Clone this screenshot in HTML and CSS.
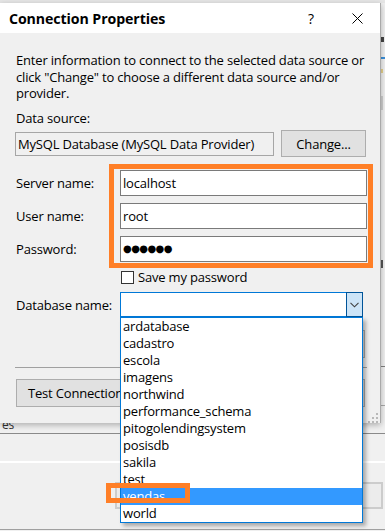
FILE: index.html
```html
<!DOCTYPE html>
<html>
<head>
<meta charset="utf-8">
<title>Connection Properties</title>
<link rel="stylesheet" href="styles.css">
</head>
<body>
<div class="desktop">
  <div class="backwin">
    <div class="bw-top">
      <div class="bw-left"><span class="bw-es">es</span></div>
      <div class="bw-strip">
        <div class="frag frag-s"></div>
        <div class="frag frag-blue"></div>
        <div class="frag frag-yellow"></div>
        <div class="frag frag-box"></div>
        <div class="frag frag-t"></div>
        <div class="frag frag-line1"></div>
        <div class="frag frag-line2"></div>
      </div>
    </div>
    <div class="bw-line"></div>
    <div class="bw-white"></div>
    <div class="bw-lower"><div class="bw-btn"></div></div>
    <div class="bw-bottom"></div>
  </div>

  <div class="dialog">
    <div class="titlebar">
      <span class="title">Connection Properties</span>
      <span class="cap-btn cap-help">?</span>
      <span class="cap-btn cap-close">
        <svg width="11" height="11" viewBox="0 0 11 11"><path d="M0.5 0.5 L10.5 10.5 M10.5 0.5 L0.5 10.5" stroke="#000" stroke-width="1" fill="none"/></svg>
      </span>
    </div>
    <div class="body">
      <p class="desc">Enter information to connect to the selected data source or<br>click "Change" to choose a different data source and/or<br>provider.</p>
      <div class="label">Data source:</div>
      <div class="ds-row">
        <div class="ds-box">MySQL Database (MySQL Data Provider)</div>
        <div class="btn btn-change">Change...</div>
      </div>
      <div class="fields">
        <div class="f-label">Server name:</div><div class="textbox">localhost</div>
        <div class="f-label">User name:</div><div class="textbox">root</div>
        <div class="f-label">Password:</div><div class="textbox pw">●●●●●●</div>
      </div>
      <div class="save-row"><span class="checkbox"></span><span>Save my password</span></div>
      <div class="db-row">
        <div class="f-label">Database name:</div>
        <div class="combo">
          <div class="combo-text"></div>
          <div class="combo-btn">
            <svg width="9" height="6" viewBox="0 0 9 6"><path d="M0.5 0.8 L4.5 4.8 L8.5 0.8" stroke="#404040" stroke-width="1.1" fill="none"/></svg>
          </div>
        </div>
      </div>
      <div class="adv-row"><div class="btn btn-adv">Advanced...</div></div>
      <div class="sep"></div>
      <div class="btn-row">
        <div class="btn btn-test">Test Connection</div>
        <div class="btn btn-ok">OK</div>
        <div class="btn btn-cancel">Cancel</div>
      </div>
      <div class="grip-row">
        <svg width="10" height="10" viewBox="0 0 10 10" fill="#b8b8b8">
          <rect x="8" y="0" width="2" height="2"/>
          <rect x="4" y="4" width="2" height="2"/><rect x="8" y="4" width="2" height="2"/>
          <rect x="0" y="8" width="2" height="2"/><rect x="4" y="8" width="2" height="2"/><rect x="8" y="8" width="2" height="2"/>
        </svg>
      </div>
    </div>
  </div>

  <ul class="dropdown">
    <li>ardatabase</li>
    <li>cadastro</li>
    <li>escola</li>
    <li>imagens</li>
    <li>northwind</li>
    <li>performance_schema</li>
    <li>pitogolendingsystem</li>
    <li>posisdb</li>
    <li>sakila</li>
    <li>test</li>
    <li class="selected">vendas</li>
    <li>world</li>
  </ul>

  <div class="mark mark-fields"></div>
  <div class="mark mark-vendas"></div>
</div>
</body>
</html>
```

FILE: styles.css
```css
* { box-sizing: border-box; }
html, body { margin: 0; padding: 0; }
body {
  width: 385px;
  height: 531px;
  overflow: hidden;
  background: #f0f0f0;
  font-family: "Open Sans", "Noto Sans", sans-serif;
  font-size: 13px;
  letter-spacing: -0.18px;
  color: #000;
}
.desktop {
  position: relative;
  width: 385px;
  height: 531px;
  overflow: hidden;
  background: #f0f0f0;
}

/* background window */
.backwin { display: flex; flex-direction: column; height: 531px; }
.bw-top { height: 433px; display: flex; border-top: 3px solid #e6e6e6; }
.bw-left { width: 381px; display: flex; align-items: flex-end; }
.bw-es { font-size: 12px; line-height: 14px; margin: 0 0 1px 2px; color: #333; }
.bw-strip { flex: 1; display: flex; flex-direction: column; }
.frag { flex: none; }
.frag-s { height: 5px; width: 3px; margin-top: 34px; background: #444; }
.frag-blue { height: 2px; margin-top: 15px; background: #3c8fd8; }
.frag-yellow { height: 4px; width: 2px; margin-top: 10px; background: #e4cf8a; }
.frag-box { height: 14px; width: 2px; margin-top: 23px; background: #cfcfcf; }
.frag-t { height: 8px; width: 2px; margin-top: 150px; background: #555; }
.frag-line1 { height: 1px; margin-top: 98px; background: #808080; }
.frag-line2 { height: 1px; margin-top: 38px; background: #a8a8a8; }
.bw-line { height: 1px; background: #8a8a8a; }
.bw-white { height: 2px; margin-top: 27px; background: #fff; }
.bw-lower { padding: 19px 2px 0 115px; }
.bw-btn { height: 27px; border: 2px solid #cccccc; background: #ececec; }
.bw-bottom { height: 1px; margin-top: 20px; background: #a0a0a0; }

/* dialog */
.dialog {
  position: absolute;
  left: 0;
  top: 3px;
  width: 381px;
  height: 420px;
  background: #f0f0f0;
  border-right: 1px solid #a9a9a9;
  box-shadow: 0 2px 6px rgba(0, 0, 0, 0.28);
  display: flex;
  flex-direction: column;
}
.titlebar {
  height: 30px;
  flex: none;
  background: #fff;
  display: flex;
  align-items: center;
  padding-left: 9px;
}
.title { flex: 1; font-weight: 700; font-size: 14.2px; letter-spacing: -0.1px; }
.cap-btn {
  width: 46px;
  height: 30px;
  display: flex;
  align-items: center;
  justify-content: center;
}
.cap-help { font-size: 14px; }

.body {
  flex: 1;
  display: flex;
  flex-direction: column;
  padding: 19px 13px 0 16px;
}
.desc { margin: 0; line-height: 16.5px; white-space: nowrap; }
.label { margin-top: 8.5px; line-height: 16px; }
.ds-row { margin-top: 4px; height: 27px; display: flex; align-items: center; }
.ds-box {
  margin-left: -1px;
  width: 259px;
  height: 24px;
  border: 1px solid #a6a6a6;
  padding-left: 2px;
  line-height: 22px;
  white-space: nowrap;
}
.btn {
  height: 27px;
  background: #e1e1e1;
  border: 1px solid #adadad;
  display: flex;
  align-items: center;
  justify-content: center;
  white-space: nowrap;
}
.btn-change { margin-left: 7px; width: 85px; }

.fields {
  margin-top: 13px;
  display: grid;
  grid-template-columns: 104px 247px;
  grid-auto-rows: 26px;
  row-gap: 7px;
  align-items: center;
}
.f-label { line-height: 16px; }
.textbox {
  height: 26px;
  background: #fff;
  border: 1px solid #7a7a7a;
  padding-left: 2px;
  line-height: 24px;
}
.pw { font-family: "DejaVu Sans", sans-serif; font-size: 10px; letter-spacing: -0.6px; }

.save-row { margin-top: 7px; height: 16px; display: flex; align-items: center; padding-left: 105px; }
.checkbox {
  width: 13px;
  height: 13px;
  border: 1px solid #333;
  background: #fff;
  margin-right: 4px;
}

.db-row { margin-top: 7px; height: 25px; display: grid; grid-template-columns: 104px 243px; align-items: center; }
.combo { height: 25px; display: flex; }
.combo-text { flex: 1; border: 1px solid #0078d7; border-right: none; background: #fff; }
.combo-btn {
  width: 17px;
  background: #cce4f7;
  border: 1px solid #005499;
  display: flex;
  align-items: center;
  justify-content: center;
}

.adv-row { margin-top: 13px; display: flex; justify-content: flex-end; padding-right: 2px; }
.btn-adv { width: 100px; height: 28px; }
.sep { margin-top: 9px; height: 1px; background: #a0a0a0; margin-left: -1px; }
.btn-row { margin-top: 11px; display: flex; gap: 7px; padding-right: 2px; }
.btn-test { width: 124px; height: 28px; justify-content: flex-start; padding-left: 11px; }
.btn-ok { margin-left: auto; width: 85px; height: 28px; }
.btn-cancel { width: 85px; height: 28px; }
.grip-row { margin-top: 6px; margin-right: -11px; display: flex; justify-content: flex-end; }

/* dropdown list popup */
.dropdown {
  position: absolute;
  left: 120px;
  top: 317px;
  width: 243px;
  height: 206px;
  margin: 0;
  padding: 0;
  list-style: none;
  background: #fff;
  border: 1px solid #0078d7;
  box-shadow: 3px 3px 4px rgba(0, 0, 0, 0.3);
}
.dropdown li { height: 17px; line-height: 17px; padding-left: 2px; white-space: nowrap; }
.dropdown li.selected { background: #3399ff; color: #fff; }

/* annotation marks */
.mark { position: absolute; border: 5px solid #ff7f27; }
.mark-fields { left: 109px; top: 164px; width: 264px; height: 104px; }
.mark-vendas { left: 106px; top: 483px; width: 84px; height: 20px; }
```
